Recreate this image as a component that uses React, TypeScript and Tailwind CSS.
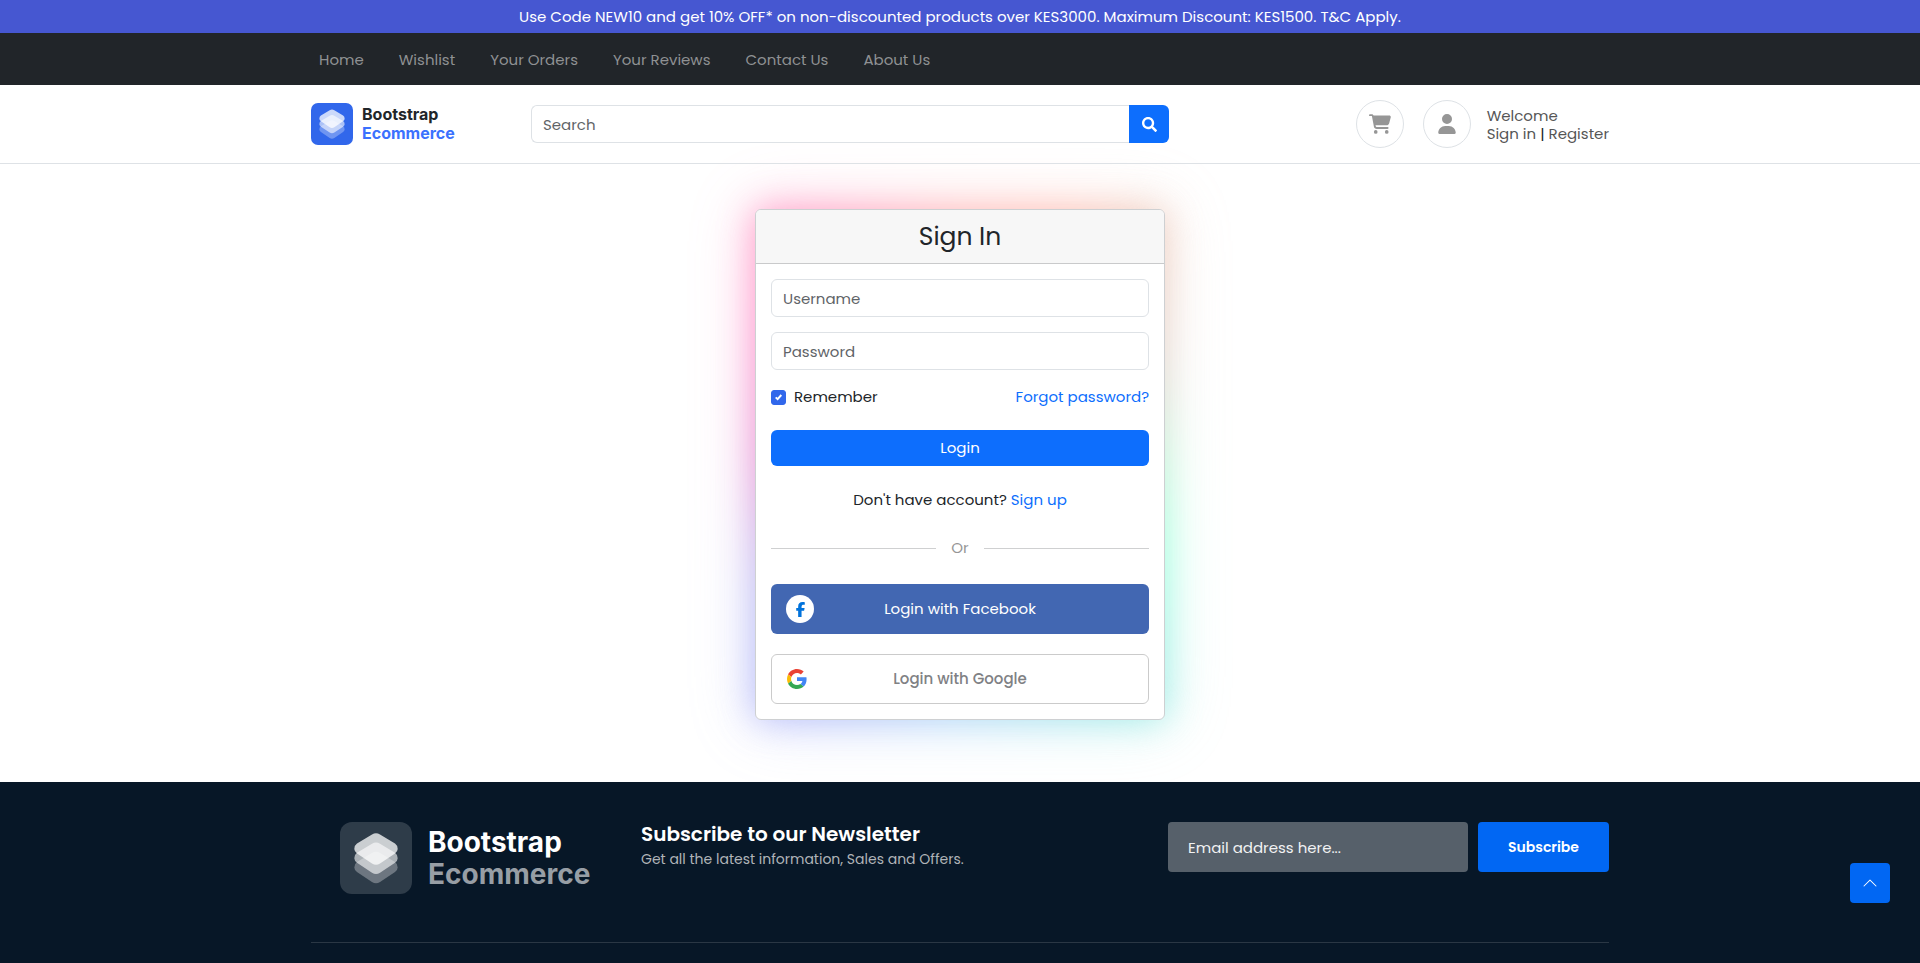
import React from "react";
import { FaCartShopping, FaFacebookF, FaUser } from "react-icons/fa6";
import { FaSearch } from "react-icons/fa";
import { BsChevronUp } from "react-icons/bs";

const NAV = ["Home", "Wishlist", "Your Orders", "Your Reviews", "Contact Us", "About Us"];

const GLOW =
  "bg-[conic-gradient(#ff9a9a_0deg,#ffa294_22deg,#e6b8a4_39deg,#d9c4b8_60deg,#c2d2bd_72deg,#a3eac0_88deg,#71ffcc_115deg,#74e3da_141deg,#8ac4f2_180deg,#949cf7_217deg,#9b9bee_236deg,#db61c3_271deg,#ff61b3_309deg,#ff71ad_325deg,#ff9a9a_360deg)]";

function Mark({ className, tile, tileOpacity = 1 }: { className: string; tile: string; tileOpacity?: number }) {
  const layer =
    "M40 -14.6Q36 -17 32 -14.6L17 -5.6Q14.3 -3.8 14.3 0Q14.3 2.4 17 4.4L32 14.4Q36 17 40 14.4L55 4.4Q57.7 2.4 57.7 0Q57.7 -3.8 55 -5.6Z";
  return (
    <svg viewBox="0 0 72 72" className={className} aria-hidden="true">
      <rect width="72" height="72" rx="12" fill={tile} fillOpacity={tileOpacity} />
      <g fill="#fff" transform="translate(0 27)">
        <path d={layer} transform="translate(0 18.5)" fillOpacity="0.3" />
        <path d={layer} transform="translate(0 9.3)" fillOpacity="0.6" />
        <path d={layer} fillOpacity="0.75" />
      </g>
    </svg>
  );
}

function GoogleIcon() {
  return (
    <svg viewBox="0 0 48 48" className="size-5" aria-hidden="true">
      <path fill="#EA4335" d="M24 9.5c3.54 0 6.71 1.22 9.21 3.6l6.85-6.85C35.9 2.38 30.47 0 24 0 14.62 0 6.51 5.38 2.56 13.22l7.98 6.19C12.43 13.72 17.74 9.5 24 9.5z" />
      <path fill="#4285F4" d="M46.98 24.55c0-1.57-.15-3.09-.38-4.55H24v9.02h12.94c-.58 2.96-2.26 5.48-4.78 7.18l7.73 6c4.51-4.18 7.09-10.36 7.09-17.65z" />
      <path fill="#FBBC05" d="M10.53 28.59c-.48-1.45-.76-2.99-.76-4.59s.27-3.14.76-4.59l-7.98-6.19C.92 16.46 0 20.12 0 24c0 3.88.92 7.54 2.56 10.78l7.97-6.19z" />
      <path fill="#34A853" d="M24 48c6.48 0 11.93-2.13 15.89-5.81l-7.73-6c-2.15 1.45-4.92 2.3-8.16 2.3-6.26 0-11.57-4.22-13.47-9.91l-7.98 6.19C6.51 42.62 14.62 48 24 48z" />
    </svg>
  );
}

function Field({ id, label, type }: { id: string; label: string; type: string }) {
  return (
    <input
      id={id}
      type={type}
      aria-label={label}
      placeholder={label}
      className="h-[38px] w-full rounded-md border border-[#dee2e6] bg-white px-[11px] text-[15px] placeholder:text-[#5f6468]"
    />
  );
}

export default function App() {
  return (
    <div className="relative isolate flex min-h-screen flex-col bg-white font-['Poppins','Inter',sans-serif] text-[15px] leading-6 text-[#212529]">
      <div className="flex min-h-[33px] items-center justify-center bg-[#4657d1] px-4 text-center text-white">
        Use Code NEW10 and get 10% OFF* on non-discounted products over KES3000. Maximum Discount: KES1500. T&amp;C Apply.
      </div>

      <nav className="bg-[#212529]">
        <div className="mx-auto flex min-h-[52px] max-w-[1322px] flex-wrap items-center gap-x-[35px] px-5 pt-0.5 text-[#8f9193]">
          {NAV.map((item) => (
            <a key={item} href="#">{item}</a>
          ))}
        </div>
      </nav>

      <header className="border-b border-[#dee2e6]">
        <div className="mx-auto flex min-h-[78px] max-w-[1322px] items-center px-3">
          <a href="#" className="flex w-[220px] shrink-0 items-center gap-[9px] font-['Inter',sans-serif] text-base font-bold leading-[19px]">
            <Mark className="size-[42px]" tile="#3167eb" />
            <span>
              Bootstrap
              <br />
              <span className="text-[#3b71fe]">Ecommerce</span>
            </span>
          </a>
          <form className="flex min-w-0 max-w-[638px] flex-1" onSubmit={(e) => e.preventDefault()}>
            <input
              type="search"
              aria-label="Search"
              placeholder="Search"
              className="h-[38px] min-w-0 flex-1 rounded-l-md border border-r-0 border-[#dee2e6] bg-white px-[11px] text-[15px] placeholder:text-[#5f6468]"
            />
            <button type="submit" aria-label="Submit search" className="flex h-[38px] w-10 items-center justify-center rounded-r-md bg-[#0d6efd] text-white">
              <FaSearch className="size-[15px]" />
            </button>
          </form>
          <div className="ml-auto flex shrink-0 items-center">
            <a href="#" aria-label="Cart" className="mr-[19px] flex size-12 items-center justify-center rounded-full border border-[#dee2e6] text-[#969696]">
              <FaCartShopping className="size-[22px]" />
            </a>
            <a href="#" aria-label="Account" className="mr-4 flex size-12 items-center justify-center rounded-full border border-[#dee2e6] text-[#969696]">
              <FaUser className="size-5" />
            </a>
            <div className="pt-0.5 leading-[18px] text-[#565656]">
              <p>Welcome</p>
              <p>
                <a href="#">Sign in</a> <span className="text-[#212529]">|</span> <a href="#">Register</a>
              </p>
            </div>
          </div>
        </div>
      </header>

      <main className="flex justify-center px-4 pt-[45px] pb-[62px]">
        <section className="relative w-full max-w-[410px]">
          <div className={`absolute inset-0 -z-10 opacity-60 blur-[18px] ${GLOW}`} />
          <div className={`absolute -inset-1 -z-10 opacity-25 blur-[32px] ${GLOW}`} />
          <div className="overflow-hidden rounded-md border border-[#ced0d2] bg-white">
            <h1 className="border-b border-[#c9cacb] bg-[#f7f7f7] py-3 text-center text-[25px] leading-[29px]">Sign In</h1>
            <form className="flex flex-col p-[15px]" onSubmit={(e) => e.preventDefault()}>
              <div className="flex flex-col gap-[15px]">
                <Field id="username" label="Username" type="text" />
                <Field id="password" label="Password" type="password" />
              </div>
              <div className="mt-[15px] flex items-center justify-between">
                <label className="flex items-center gap-2">
                  <span className="relative flex size-[15px]">
                    <input type="checkbox" defaultChecked className="peer size-[15px] appearance-none rounded-[3px] border border-[#adb5bd] checked:border-[#3167eb] checked:bg-[#3167eb]" />
                    <svg viewBox="0 0 15 15" className="pointer-events-none absolute inset-0 hidden peer-checked:block" aria-hidden="true">
                      <path d="M4.7 7.4 6.6 9.2 10.3 5" fill="none" stroke="#fff" strokeWidth="1.9" />
                    </svg>
                  </span>
                  Remember
                </label>
                <a href="#" className="text-[#0d6efd]">Forgot password?</a>
              </div>
              <button type="submit" className="mt-[21px] h-9 rounded-md bg-[#0d6efd] text-white">Login</button>
              <p className="mt-[22px] text-center">
                Don't have account? <a href="#" className="text-[#0d6efd]">Sign up</a>
              </p>
              <div className="mt-6 flex items-center gap-[15px] text-[#969696] before:h-px before:flex-1 before:bg-[#cfd0d1] after:h-px after:flex-1 after:bg-[#cfd0d1]">
                Or
              </div>
              <button type="button" className="relative mt-6 h-[50px] rounded-md bg-[#4267b2] text-white">
                <span className="absolute top-[11px] left-[15px] flex size-7 items-center justify-center rounded-full bg-white text-[#0072db]">
                  <FaFacebookF className="size-[15px]" />
                </span>
                Login with Facebook
              </button>
              <button type="button" className="relative mt-5 h-[50px] rounded-md border border-[#cbcbcb] bg-white font-medium text-[#7f8184]">
                <span className="absolute top-[14px] left-[15px]">
                  <GoogleIcon />
                </span>
                Login with Google
              </button>
            </form>
          </div>
        </section>
      </main>

      <footer className="flex-1 bg-[#071727] px-3">
        <div className="mx-auto flex max-w-[1298px] border-b border-[#2a3744] pt-10 pb-12">
          <a href="#" className="ml-[29px] flex w-[301px] shrink-0 items-center gap-4 font-['Inter',sans-serif] text-[28px] font-bold leading-8 text-white">
            <Mark className="size-[72px]" tile="#fff" tileOpacity={0.16} />
            <span>
              Bootstrap
              <br />
              <span className="text-[#979ea5]">Ecommerce</span>
            </span>
          </a>
          <div>
            <h2 className="text-xl font-semibold leading-6 text-white">Subscribe to our Newsletter</h2>
            <p className="mt-[3px] text-sm leading-5 text-[#b0b4b8]">Get all the latest information, Sales and Offers.</p>
          </div>
          <form className="ml-auto flex items-start gap-[10px]" onSubmit={(e) => e.preventDefault()}>
            <input
              type="email"
              aria-label="Email address"
              placeholder="Email address here..."
              className="h-[50px] w-[300px] rounded bg-[#56606a] px-5 text-[15px] text-white placeholder:text-[#f1f2f3]"
            />
            <button type="submit" className="h-[50px] w-[131px] rounded bg-[#0167f3] text-sm font-semibold text-white">Subscribe</button>
          </form>
        </div>
      </footer>

      <button type="button" aria-label="Back to top" className="fixed right-[30px] bottom-[60px] flex size-10 items-center justify-center rounded bg-[#0167f3] text-white">
        <BsChevronUp className="size-4" />
      </button>
    </div>
  );
}
